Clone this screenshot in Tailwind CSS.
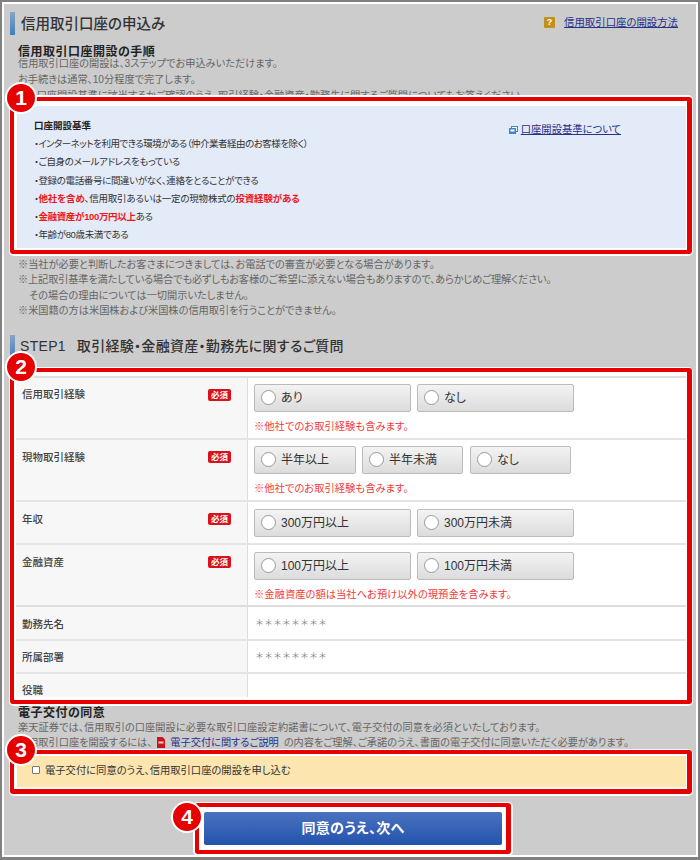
<!DOCTYPE html>
<html lang="ja">
<head>
<meta charset="UTF-8" />
<meta name="viewport" content="width=device-width, initial-scale=1" />
<title>信用取引口座の申込み</title>
<script src="https://cdn.jsdelivr.net/npm/@tailwindcss/browser@4"></script>
</head>
<body class="bg-[#808080]">
<div class="w-[700px] h-[860px] overflow-hidden pt-[2px] pl-[2px] pr-[2px] pb-[3px] font-['Liberation_Sans','Noto_Sans_CJK_JP',sans-serif] [font-feature-settings:'palt'] text-[10.2px] text-[#666]">
  <div class="h-[855px] border-2 border-white bg-[#cccccc]">

    <!-- タイトル -->
    <div class="flex items-center justify-between h-[23px] mt-[8px] ml-[6px] mr-[18px]">
      <div class="flex items-center">
        <div class="w-[5px] h-[23px] bg-gradient-to-b from-[#8aa4c4] to-[#3f7fbb]"></div>
        <h1 class="ml-[6px] mt-[3px] text-[14.5px] font-medium text-[#333]">信用取引口座の申込み</h1>
      </div>
      <div class="flex items-center mb-[2px]">
        <span class="w-[11px] h-[11px] rounded-[1px] bg-[#c4901c] text-white text-[9px] font-bold leading-[11px] text-center">?</span>
        <a class="ml-[9px] text-[10.4px] text-[#27308a] underline">信用取引口座の開設方法</a>
      </div>
    </div>

    <!-- 手順 -->
    <h2 class="ml-[14px] mt-[11px] h-[12px] leading-[12px] text-[12px] font-bold text-[#222] tracking-[0.5px]">信用取引口座開設の手順</h2>
    <div class="ml-[14px] -mt-[2px] h-[39px] overflow-hidden leading-[16px]">
      <p>信用取引口座の開設は、3ステップでお申込みいただけます。</p>
      <p>お手続きは通常、10分程度で完了します。</p>
      <p>この口座開設基準に該当するかご確認のうえ、取引経験・金融資産・勤務先に関するご質問についてもお答えください。</p>
    </div>

    <!-- 1 口座開設基準 -->
    <div class="relative ml-[5px] w-[684px] rounded-[5px] bg-white pt-[2px] pb-[2px] px-[1px]">
      <div class="absolute -left-[4px] -top-[13px] w-[32px] h-[32px] rounded-full bg-[#e60000] border-[2px] border-white text-white text-[21px] font-bold leading-[28px] text-center font-['Liberation_Sans',sans-serif]">1</div>
      <div class="rounded-[3px] border-[4px] border-r-[5px] border-[#e60000] bg-white pt-[5px] pb-[2px] pl-[3px] pr-[1px]">
        <div class="flex justify-between h-[142px] bg-[#e3eaf8] pl-[17px] pr-[65px] pt-[11px] text-[9.5px] tracking-[-0.35px] leading-[18.2px] text-[#333]">
          <ul>
            <li class="font-bold text-[#222] tracking-normal">口座開設基準</li>
            <li class="tracking-[-0.5px]">・インターネットを利用できる環境がある（仲介業者経由のお客様を除く）</li>
            <li>・ご自身のメールアドレスをもっている</li>
            <li>・登録の電話番号に間違いがなく、連絡をとることができる</li>
            <li class="tracking-[-0.2px]">・<b class="text-[#f01818]">他社を含め</b>、信用取引あるいは一定の現物株式の<b class="text-[#f01818]">投資経験がある</b></li>
            <li>・<b class="text-[#f01818]">金融資産が100万円以上</b>ある</li>
            <li>・年齢が80歳未満である</li>
          </ul>
          <div class="flex items-center h-[18px] mt-[4px] tracking-normal">
            <svg class="w-[9px] h-[8px]" viewBox="0 0 9 8"><rect x="2.5" y="0.5" width="6" height="5" fill="#fff" stroke="#3f86c8"/><rect x="0" y="2" width="7" height="6" fill="#3f86c8"/><rect x="1.5" y="3.5" width="4" height="2" fill="#fff"/></svg>
            <a class="ml-[3px] text-[10.3px] text-[#27308a] underline">口座開設基準について</a>
          </div>
        </div>
      </div>
    </div>

    <!-- 注意書き -->
    <div class="ml-[14px] pt-[1px] leading-[15.4px]">
      <p>※当社が必要と判断したお客さまにつきましては、お電話での審査が必要となる場合があります。</p>
      <p class="tracking-[-0.14px]">※上記取引基準を満たしている場合でも必ずしもお客様のご希望に添えない場合もありますので、あらかじめご理解ください。</p>
      <p class="pl-[11px]">その場合の理由については一切開示いたしません。</p>
      <p>※米国籍の方は米国株および米国株の信用取引を行うことができません。</p>
    </div>

    <!-- STEP1 -->
    <div class="flex items-center h-[23px] mt-[16px] ml-[6px]">
      <div class="w-[5px] h-[23px] bg-gradient-to-b from-[#8aa4c4] to-[#3f7fbb]"></div>
      <h2 class="ml-[5px] text-[14px] font-medium text-[#333] tracking-[0.3px]"><span class="mr-[11px]">STEP1</span>取引経験・金融資産・勤務先に関するご質問</h2>
    </div>

    <!-- 2 質問テーブル -->
    <div class="relative mt-[9px] ml-[5px] w-[684px] rounded-[5px] bg-white pt-[1px] pb-[2px] px-[1px]">
      <div class="absolute -left-[4px] -top-[16px] w-[32px] h-[32px] rounded-full bg-[#e60000] border-[2px] border-white text-white text-[21px] font-bold leading-[28px] text-center font-['Liberation_Sans',sans-serif]">2</div>
      <div class="rounded-[3px] border-[4px] border-r-[5px] border-[#e60000] bg-white pt-[4px] pb-[3px] pl-[2px] pr-[1px]">
        <div class="h-[321px] overflow-hidden border-t-2 border-[#dfdfdf] text-[10.5px] text-[#444]">

          <div class="flex h-[62px] border-b-2 border-[#e4e4e4]">
            <div class="flex justify-between w-[232px] bg-[#f7f7f7] border-r border-[#dddddd] pl-[6px] pr-[16px] pt-[9px] font-medium leading-[14px]">信用取引経験<span class="w-[23px] h-[12px] mt-[2px] rounded-[2px] bg-[#d8121a] text-white text-[8.5px] font-bold leading-[12px] text-center">必須</span></div>
            <div class="pl-[6px] pt-[6px]">
              <div class="flex gap-[6px]">
                <label class="flex items-center w-[157px] h-[28px] pl-[6px] rounded-[2px] border border-[#bbbbbb] bg-gradient-to-b from-[#f3f3f3] to-[#dcdcdc] text-[12px] text-[#333]"><span class="w-[15px] h-[15px] mr-[5px] rounded-full border border-[#999] bg-white"></span>あり</label>
                <label class="flex items-center w-[157px] h-[28px] pl-[6px] rounded-[2px] border border-[#bbbbbb] bg-gradient-to-b from-[#f3f3f3] to-[#dcdcdc] text-[12px] text-[#333]"><span class="w-[15px] h-[15px] mr-[5px] rounded-full border border-[#999] bg-white"></span>なし</label>
              </div>
              <p class="mt-[8px] leading-[14px] text-[10.3px] text-[#f33a3a]">※他社でのお取引経験も含みます。</p>
            </div>
          </div>

          <div class="flex h-[62px] border-b-2 border-[#e4e4e4]">
            <div class="flex justify-between w-[232px] bg-[#f7f7f7] border-r border-[#dddddd] pl-[6px] pr-[16px] pt-[10px] font-medium leading-[14px]">現物取引経験<span class="w-[23px] h-[12px] mt-[1px] rounded-[2px] bg-[#d8121a] text-white text-[8.5px] font-bold leading-[12px] text-center">必須</span></div>
            <div class="pl-[6px] pt-[6px]">
              <div class="flex gap-[6px]">
                <label class="flex items-center w-[102px] h-[28px] pl-[6px] rounded-[2px] border border-[#bbbbbb] bg-gradient-to-b from-[#f3f3f3] to-[#dcdcdc] text-[12px] text-[#333]"><span class="w-[15px] h-[15px] mr-[5px] rounded-full border border-[#999] bg-white"></span>半年以上</label>
                <label class="flex items-center w-[101px] h-[28px] pl-[6px] rounded-[2px] border border-[#bbbbbb] bg-gradient-to-b from-[#f3f3f3] to-[#dcdcdc] text-[12px] text-[#333]"><span class="w-[15px] h-[15px] mr-[5px] rounded-full border border-[#999] bg-white"></span>半年未満</label>
                <label class="flex items-center w-[101px] h-[28px] ml-[1px] pl-[6px] rounded-[2px] border border-[#bbbbbb] bg-gradient-to-b from-[#f3f3f3] to-[#dcdcdc] text-[12px] text-[#333]"><span class="w-[15px] h-[15px] mr-[5px] rounded-full border border-[#999] bg-white"></span>なし</label>
              </div>
              <p class="mt-[8px] leading-[14px] text-[10.3px] text-[#f33a3a]">※他社でのお取引経験も含みます。</p>
            </div>
          </div>

          <div class="flex h-[43px] border-b-2 border-[#e4e4e4]">
            <div class="flex justify-between w-[232px] bg-[#f7f7f7] border-r border-[#dddddd] pl-[6px] pr-[16px] pt-[10px] font-medium leading-[14px]">年収<span class="w-[23px] h-[12px] mt-[1px] rounded-[2px] bg-[#d8121a] text-white text-[8.5px] font-bold leading-[12px] text-center">必須</span></div>
            <div class="pl-[6px] pt-[7px]">
              <div class="flex gap-[6px]">
                <label class="flex items-center w-[157px] h-[28px] pl-[6px] rounded-[2px] border border-[#bbbbbb] bg-gradient-to-b from-[#f3f3f3] to-[#dcdcdc] text-[12px] text-[#333]"><span class="w-[15px] h-[15px] mr-[5px] rounded-full border border-[#999] bg-white"></span>300万円以上</label>
                <label class="flex items-center w-[157px] h-[28px] pl-[6px] rounded-[2px] border border-[#bbbbbb] bg-gradient-to-b from-[#f3f3f3] to-[#dcdcdc] text-[12px] text-[#333]"><span class="w-[15px] h-[15px] mr-[5px] rounded-full border border-[#999] bg-white"></span>300万円未満</label>
              </div>
            </div>
          </div>

          <div class="flex h-[62px] border-b-2 border-[#dddddd]">
            <div class="flex justify-between w-[232px] bg-[#f7f7f7] border-r border-[#dddddd] pl-[6px] pr-[16px] pt-[10px] font-medium leading-[14px]">金融資産<span class="w-[23px] h-[12px] mt-[1px] rounded-[2px] bg-[#d8121a] text-white text-[8.5px] font-bold leading-[12px] text-center">必須</span></div>
            <div class="pl-[6px] pt-[7px]">
              <div class="flex gap-[6px]">
                <label class="flex items-center w-[157px] h-[28px] pl-[6px] rounded-[2px] border border-[#bbbbbb] bg-gradient-to-b from-[#f3f3f3] to-[#dcdcdc] text-[12px] text-[#333]"><span class="w-[15px] h-[15px] mr-[5px] rounded-full border border-[#999] bg-white"></span>100万円以上</label>
                <label class="flex items-center w-[157px] h-[28px] pl-[6px] rounded-[2px] border border-[#bbbbbb] bg-gradient-to-b from-[#f3f3f3] to-[#dcdcdc] text-[12px] text-[#333]"><span class="w-[15px] h-[15px] mr-[5px] rounded-full border border-[#999] bg-white"></span>100万円未満</label>
              </div>
              <p class="mt-[8px] leading-[14px] text-[10.3px] text-[#f33a3a]">※金融資産の額は当社へお預け以外の現預金を含みます。</p>
            </div>
          </div>

          <div class="flex h-[34px] border-b-2 border-[#e4e4e4]">
            <div class="w-[232px] bg-[#f7f7f7] border-r border-[#dddddd] pl-[6px] pt-[10px] font-medium leading-[14px]">勤務先名</div>
            <div class="pl-[7px] pt-[9px] leading-[14px] text-[9px] [font-feature-settings:normal] text-[#888]">＊＊＊＊＊＊＊＊</div>
          </div>
          <div class="flex h-[33px] border-b-2 border-[#e4e4e4]">
            <div class="w-[232px] bg-[#f7f7f7] border-r border-[#dddddd] pl-[6px] pt-[9px] font-medium leading-[14px]">所属部署</div>
            <div class="pl-[7px] pt-[8px] leading-[14px] text-[9px] [font-feature-settings:normal] text-[#888]">＊＊＊＊＊＊＊＊</div>
          </div>
          <div class="flex h-[23px]">
            <div class="w-[232px] bg-[#f7f7f7] border-r border-[#dddddd] pl-[6px] pt-[9px] font-medium leading-[14px]">役職</div>
          </div>
        </div>
      </div>
    </div>

    <!-- 電子交付の同意 -->
    <h2 class="ml-[14px] mt-[1px] h-[12px] leading-[12px] text-[12px] font-bold text-[#222] tracking-[0.5px]">電子交付の同意</h2>
    <div class="ml-[14px] h-[30px] overflow-hidden leading-[15.5px] pt-[1px]">
      <p class="tracking-[0.07px]">楽天証券では、信用取引の口座開設に必要な取引口座設定約諾書について、電子交付の同意を必須といたしております。</p>
      <p class="flex items-center">信用取引口座を開設するには、<svg class="w-[8px] h-[11px] ml-[5px] mr-[5px]" viewBox="0 0 8 11"><path d="M0 0H5.5L8 2.5V11H0Z" fill="#c8161d"/><rect x="1.5" y="4.5" width="5" height="2" fill="#f3c9c9"/></svg><a class="mr-[5px] text-[#27308a] underline decoration-[#cccccc]">電子交付に関するご説明</a>の内容をご理解、ご承諾のうえ、書面の電子交付に同意いただく必要があります。</p>
    </div>

    <!-- 3 同意チェック -->
    <div class="relative ml-[5px] w-[684px] rounded-[5px] bg-white pt-[1px] pb-[2px] px-[1px]">
      <div class="absolute -left-[4px] -top-[15px] w-[32px] h-[32px] rounded-full bg-[#e60000] border-[2px] border-white text-white text-[21px] font-bold leading-[28px] text-center font-['Liberation_Sans',sans-serif]">3</div>
      <div class="rounded-[3px] border-[4px] border-b-[5px] border-r-[5px] border-[#e60000] bg-white pt-[2px] pb-[2px] pl-[3px] pr-[1px]">
        <label class="flex items-center h-[31px] bg-[#fde5b0] pl-[15px] text-[10.3px] text-[#333]"><span class="w-[8px] h-[8px] mr-[5px] mb-[3px] rounded-[1px] border border-[#777] bg-white"></span>電子交付に同意のうえ、信用取引口座の開設を申し込む</label>
      </div>
    </div>

    <!-- 4 次へ -->
    <div class="relative mt-[6px] ml-[189px] w-[320px] rounded-[5px] bg-white pt-[1px] pb-[2px] px-[2px]">
      <div class="absolute -left-[22px] -top-[1px] w-[32px] h-[32px] rounded-full bg-[#e60000] border-[2px] border-white text-white text-[21px] font-bold leading-[28px] text-center font-['Liberation_Sans',sans-serif]">4</div>
      <div class="rounded-[3px] border-[4px] border-r-[5px] border-[#e60000] bg-white py-[5px] pl-[5px] pr-[5px]">
        <button class="block w-[298px] h-[33px] rounded-[2px] bg-gradient-to-b from-[#4a72bf] to-[#2353ad] text-white text-[14px] font-bold tracking-[0.3px]">同意のうえ、次へ</button>
      </div>
    </div>
  </div>
</div>
</body>
</html>
